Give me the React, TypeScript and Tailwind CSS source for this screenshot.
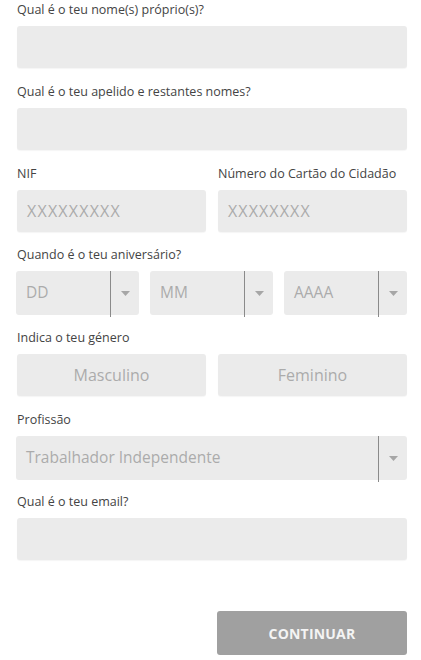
import React from "react";

const Label = ({ children }: { children: React.ReactNode }) => (
  <div className="h-[16px] text-[12.5px] leading-[16px] text-[#444] mb-[8px] whitespace-nowrap">{children}</div>
);

const Box = ({ children, className = "" }: { children?: React.ReactNode; className?: string }) => (
  <div className={`h-[42px] rounded-[3px] bg-[#ebebeb] shadow-[0_1px_1px_rgba(0,0,0,0.04)] flex items-center ${className}`}>
    {children}
  </div>
);

const Caret = () => (
  <svg width="9" height="5" viewBox="0 0 9 5" className="fill-[#a6a6a6]">
    <path d="M0 0h9L4.5 5z" />
  </svg>
);

const Select = ({ value, className = "" }: { value: string; className?: string }) => (
  <div className={`h-[44px] rounded-[3px] bg-[#ebebeb] flex items-center ${className}`}>
    <span className="flex-1 pl-[10px] text-[15.5px] text-[#ababab] whitespace-nowrap">{value}</span>
    <div className="w-px self-stretch bg-[#8a8a8a] -mb-[2px]" />
    <div className="w-[28px] flex justify-center">
      <Caret />
    </div>
  </div>
);

export default function App() {
  return (
    <main
      className="w-[421px] h-[660px] bg-white pl-[17px] pr-[14px] pt-[2px] overflow-hidden"
      style={{ fontFamily: '"Open Sans", "Noto Sans", sans-serif' }}
    >
      <Label>Qual é o teu nome(s) próprio(s)?</Label>
      <Box />

      <div className="mt-[16px]">
        <Label>Qual é o teu apelido e restantes nomes?</Label>
        <Box />
      </div>

      <div className="mt-[16px] grid grid-cols-2 gap-x-[12px]">
        <div>
          <Label>NIF</Label>
          <Box>
            <span className="pl-[10px] text-[16px] tracking-[1.2px] text-[#ababab]">XXXXXXXXX</span>
          </Box>
        </div>
        <div>
          <Label>Número do Cartão do Cidadão</Label>
          <Box>
            <span className="pl-[10px] text-[16px] tracking-[1.1px] text-[#ababab]">XXXXXXXX</span>
          </Box>
        </div>
      </div>

      <div className="mt-[15px]">
        <Label>Quando é o teu aniversário?</Label>
        <div className="grid grid-cols-3 gap-x-[11px] -ml-px">
          <Select value="DD" />
          <Select value="MM" />
          <Select value="AAAA" />
        </div>
      </div>

      <div className="mt-[15px]">
        <Label>Indica o teu género</Label>
        <div className="grid grid-cols-2 gap-x-[12px]">
          <Box className="justify-center">
            <span className="text-[16px] text-[#ababab]">Masculino</span>
          </Box>
          <Box className="justify-center">
            <span className="text-[16px] text-[#ababab]">Feminino</span>
          </Box>
        </div>
      </div>

      <div className="mt-[16px]">
        <Label>Profissão</Label>
        <Select value="Trabalhador Independente" className="-ml-px" />
      </div>

      <div className="mt-[14px]">
        <Label>Qual é o teu email?</Label>
        <Box />
      </div>

      <div className="mt-[51px] flex justify-end">
        <button className="w-[190px] h-[44px] rounded-[3px] bg-[#a0a0a0] text-[#f4f4f4] text-[14px] font-bold tracking-[0.2px]">
          CONTINUAR
        </button>
      </div>
    </main>
  );
}
